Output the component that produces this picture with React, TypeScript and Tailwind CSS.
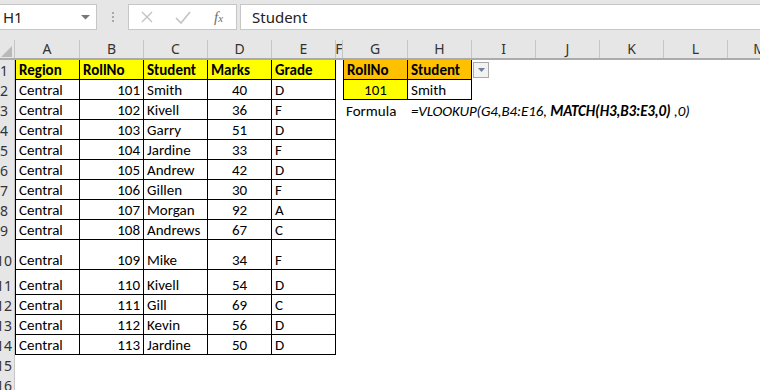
import React from "react";

const COLS = ["A", "B", "C", "D", "E", "F", "G", "H", "I", "J", "K", "L", "M"];
const COLW: Record<string, string> = {
  A: "w-[65px]",
  B: "w-[64px]",
  C: "w-[64px]",
  D: "w-[64px]",
  E: "w-[64px]",
  F: "w-[7px]",
  G: "w-[65px]",
  H: "w-[64px]",
  I: "w-[64px]",
  J: "w-[64px]",
  K: "w-[64px]",
  L: "w-[64px]",
  M: "w-[64px]",
};

const DATA: [string, number, string, number, string][] = [
  ["Central", 101, "Smith", 40, "D"],
  ["Central", 102, "Kivell", 36, "F"],
  ["Central", 103, "Garry", 51, "D"],
  ["Central", 104, "Jardine", 33, "F"],
  ["Central", 105, "Andrew", 42, "D"],
  ["Central", 106, "Gillen", 30, "F"],
  ["Central", 107, "Morgan", 92, "A"],
  ["Central", 108, "Andrews", 67, "C"],
  ["Central", 109, "Mike", 34, "F"],
  ["Central", 110, "Kivell", 54, "D"],
  ["Central", 111, "Gill", 69, "C"],
  ["Central", 112, "Kevin", 56, "D"],
  ["Central", 113, "Jardine", 50, "D"],
];

const ROWH = [
  "h-[20px]", "h-[20px]", "h-[20px]", "h-[20px]", "h-[20px]", "h-[20px]", "h-[20px]", "h-[20px]", "h-[20px]",
  "h-[30px]", "h-[25px]", "h-[20px]", "h-[20px]", "h-[20px]", "h-[20px]", "h-[20px]",
];

type CellProps = {
  col: string;
  className?: string;
  align?: "left" | "right" | "center";
  children?: React.ReactNode;
};

function Cell({ col, className = "", align = "left", children }: CellProps) {
  const al = align === "right" ? "justify-end" : align === "center" ? "justify-center" : "justify-start";
  return (
    <div className={`${COLW[col]} h-full shrink-0 flex items-end ${al} px-[3px] whitespace-nowrap ${className}`}>
      {children}
    </div>
  );
}

function TopBar() {
  return (
    <div className="h-[40px] bg-[#e6e6e6] flex items-start pt-[4px] font-['Noto_Sans',sans-serif]">
      <div className="-ml-px w-[98px] h-[26px] bg-white border border-[#c6c6c6] flex items-center justify-between pl-[3px] pr-[6px] shrink-0">
        <span className="text-[15px] text-[#222] leading-none">H1</span>
        <svg width="9" height="5" viewBox="0 0 9 5">
          <polygon points="0,0 9,0 4.5,4.5" fill="#777" />
        </svg>
      </div>
      <div className="w-[31px] h-[26px] flex flex-col items-center justify-center gap-[2px] shrink-0">
        <div className="w-[2px] h-[2px] bg-[#a8a8a8]" />
        <div className="w-[2px] h-[2px] bg-[#a8a8a8]" />
        <div className="w-[2px] h-[2px] bg-[#a8a8a8]" />
      </div>
      <div className="w-[109px] h-[26px] bg-white border border-[#c6c6c6] flex shrink-0">
        <div className="w-[36px] flex items-center justify-center">
          <svg width="12" height="12" viewBox="0 0 12 12">
            <path d="M1 1 L11 11 M11 1 L1 11" stroke="#c2c2c2" strokeWidth="1.4" />
          </svg>
        </div>
        <div className="w-[36px] flex items-center justify-center">
          <svg width="16" height="13" viewBox="0 0 16 13">
            <path d="M1 7 L6 12 L15 1" stroke="#c2c2c2" strokeWidth="1.6" fill="none" />
          </svg>
        </div>
        <div className="w-[35px] flex items-center justify-center">
          <span className="font-['Liberation_Serif',serif] italic text-[#6e6e6e] text-[15px] leading-none">
            f<span className="text-[11px]">x</span>
          </span>
        </div>
      </div>
      <div className="ml-[3px] flex-1 h-[26px] -mr-px bg-white border border-[#c6c6c6] flex items-center pl-[11px]">
        <span className="text-[15px] text-[#222] leading-none">Student</span>
      </div>
    </div>
  );
}

function ColHeader() {
  return (
    <div className="h-[20px] flex bg-[#e6e6e6] border-b-2 border-[#ababab] font-['Noto_Sans',sans-serif] text-[14px] text-[#333]">
      <div className="w-[15px] shrink-0 h-full border-r border-[#c6c6c6] flex items-end justify-end pr-[2px] pb-[1px]">
        <svg width="11" height="11" viewBox="0 0 11 11">
          <polygon points="11,0 11,11 0,11" fill="#b9b9b9" />
        </svg>
      </div>
      {COLS.map((c) => (
        <div
          key={c}
          className={`${COLW[c]} shrink-0 h-full border-r border-[#c6c6c6] flex items-center justify-center leading-none overflow-hidden`}
        >
          {c}
        </div>
      ))}
    </div>
  );
}

function RowHead({ n }: { n: number }) {
  return (
    <div className="w-[15px] shrink-0 h-full bg-[#e6e6e6] border-r border-[#c6c6c6] overflow-hidden flex items-end">
      <div className="w-[24px] -ml-[8px] shrink-0 text-center font-['Noto_Sans',sans-serif] text-[14px] text-[#333] leading-[18px]">
        {n}
      </div>
    </div>
  );
}

const B = "border-r border-b border-black";

function SheetRow({ r }: { r: number }) {
  const h = ROWH[r - 1];
  const cells: React.ReactNode[] = [];
  if (r === 1) {
    cells.push(
      <Cell key="A" col="A" className={`${B} border-l bg-[#ffff00] font-bold`}>Region</Cell>,
      <Cell key="B" col="B" className={`${B} bg-[#ffff00] font-bold`}>RollNo</Cell>,
      <Cell key="C" col="C" className={`${B} bg-[#ffff00] font-bold`}>Student</Cell>,
      <Cell key="D" col="D" className={`${B} bg-[#ffff00] font-bold`}>Marks</Cell>,
      <Cell key="E" col="E" className={`${B} bg-[#ffff00] font-bold`}>Grade</Cell>
    );
  } else if (r <= 14) {
    const d = DATA[r - 2];
    cells.push(
      <Cell key="A" col="A" className={`${B} border-l`}>{d[0]}</Cell>,
      <Cell key="B" col="B" className={B} align="right">{d[1]}</Cell>,
      <Cell key="C" col="C" className={B}>{d[2]}</Cell>,
      <Cell key="D" col="D" className={B} align="center">{d[3]}</Cell>,
      <Cell key="E" col="E" className={B}>{d[4]}</Cell>
    );
  } else {
    ["A", "B", "C", "D", "E"].forEach((c) => cells.push(<Cell key={c} col={c} />));
  }
  cells.push(<Cell key="F" col="F" className="px-0" />);
  if (r === 1) {
    cells.push(
      <Cell key="G" col="G" className={`${B} border-l bg-[#ffc000] font-bold`}>RollNo</Cell>,
      <Cell key="H" col="H" className={`${B} bg-[#ffc000] font-bold`}>Student</Cell>,
      <div key="I" className={`${COLW.I} h-full shrink-0 pt-[2px] pl-px`}>
        <div className="w-[16px] h-[16px] bg-[#f2f2f2] border border-[#a9a9a9] flex items-center justify-center">
          <svg width="7" height="4" viewBox="0 0 7 4">
            <polygon points="0,0 7,0 3.5,4" fill="#6f7f95" />
          </svg>
        </div>
      </div>
    );
    ["J", "K", "L", "M"].forEach((c) => cells.push(<Cell key={c} col={c} />));
  } else if (r === 2) {
    cells.push(
      <Cell key="G" col="G" className={`${B} border-l bg-[#ffff00]`} align="center">101</Cell>,
      <Cell key="H" col="H" className={B}>Smith</Cell>
    );
    ["I", "J", "K", "L", "M"].forEach((c) => cells.push(<Cell key={c} col={c} />));
  } else if (r === 3) {
    cells.push(
      <Cell key="G" col="G">Formula</Cell>,
      <Cell key="H" col="H" className="overflow-visible italic">
        <span className="tracking-[-0.1px]">
          =VLOOKUP(G4,B4:E16, <b>MATCH(H3,B3:E3,0)</b> ,0)
        </span>
      </Cell>
    );
    ["I", "J", "K", "L", "M"].forEach((c) => cells.push(<Cell key={c} col={c} />));
  } else {
    ["G", "H", "I", "J", "K", "L", "M"].forEach((c) => cells.push(<Cell key={c} col={c} />));
  }
  return (
    <div className={`${h} flex`}>
      <RowHead n={r} />
      {cells}
    </div>
  );
}

export default function App() {
  return (
    <div className="w-[760px] h-[390px] overflow-hidden bg-white">
      <TopBar />
      <ColHeader />
      <div className="font-['Carlito','Lato',sans-serif] text-[15px] leading-[18px] text-black">
        {Array.from({ length: 16 }, (_, i) => (
          <SheetRow key={i} r={i + 1} />
        ))}
      </div>
    </div>
  );
}
